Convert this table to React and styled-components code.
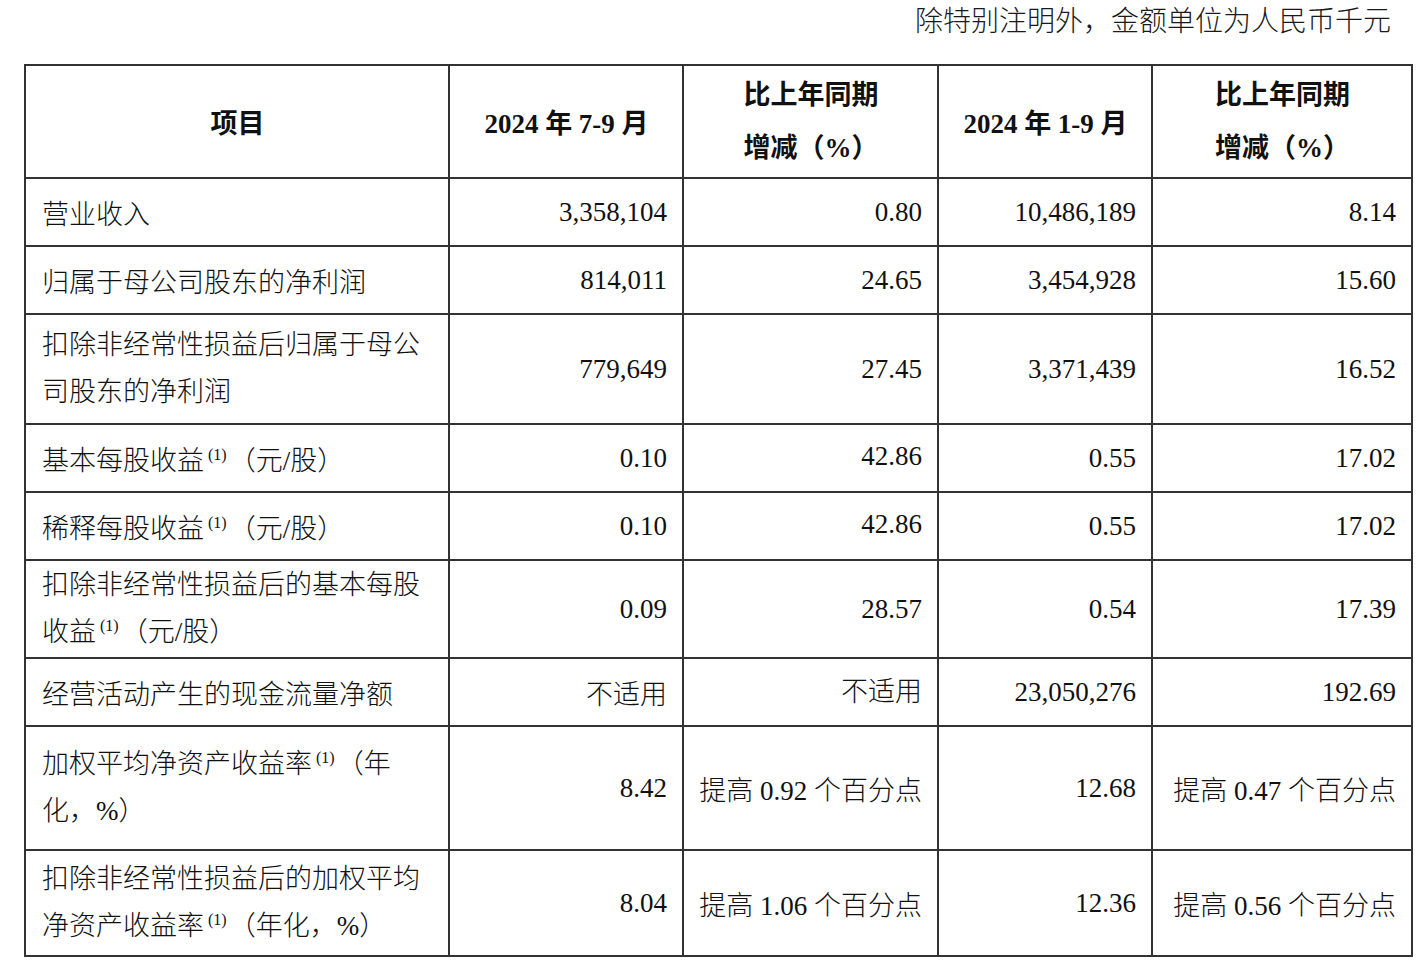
import React from "react";
import styled, { createGlobalStyle } from "styled-components";

const GlobalStyle = createGlobalStyle`
  html, body {
    margin: 0;
    padding: 0;
    background: #ffffff;
  }
  body {
    font-family: "Liberation Serif", "Noto Sans CJK SC", serif;
    color: #111;
  }
`;

const Page = styled.div`
  padding: 0 9px 0 24px;
  width: 1390px;
`;

const Note = styled.div`
  text-align: right;
  font-size: 28px;
  line-height: 44px;
  font-weight: 300;
  padding-right: 23px;
  margin-bottom: 20px;
  color: #1a1a1a;
`;

const Grid = styled.div`
  display: grid;
  grid-template-columns: 422px 232px 253px 212px 258px;
  grid-template-rows: ${(p) => p.$rows.map((r) => `${r}px`).join(" ")};
  gap: 2px;
  background: #333;
  border: 2px solid #333;
  width: max-content;
`;

const Cell = styled.div`
  background: #fff;
  display: flex;
  align-items: center;
  justify-content: ${(p) =>
    p.$align === "left" ? "flex-start" : p.$align === "center" ? "center" : "flex-end"};
  padding: 0 15px 0 16px;
  font-size: 27px;
  font-weight: ${(p) => (p.$head ? 700 : 300)};
  color: #111;
  white-space: nowrap;
`;

const Lines = styled.div`
  line-height: ${(p) => p.$lh || 47}px;
  text-align: left;
`;

const Num = styled.span`
  position: relative;
  top: ${(p) => p.$shift || 0}px;
`;

const Sup = styled.span`
  font-size: 16px;
  font-weight: 300;
  vertical-align: baseline;
  line-height: 1;
  position: relative;
  top: -10px;
  margin: 0 2px 0 4px;
`;

const rowHeights = [111, 66, 66, 108, 66, 66, 96, 66, 122, 104];

const S = () => <Sup>(1)</Sup>;

const rows = [
  { label: "营业收入", v: ["3,358,104", "0.80", "10,486,189", "8.14"] },
  { label: "归属于母公司股东的净利润", v: ["814,011", "24.65", "3,454,928", "15.60"] },
  {
    label: (
      <Lines>
        扣除非经常性损益后归属于母公
        <br />
        司股东的净利润
      </Lines>
    ),
    v: ["779,649", "27.45", "3,371,439", "16.52"],
  },
  {
    label: (
      <span>
        基本每股收益
        <S />
        （元/股）
      </span>
    ),
    v: ["0.10", "42.86", "0.55", "17.02"],
    shift: [0, -2, 0, 0],
  },
  {
    label: (
      <span>
        稀释每股收益
        <S />
        （元/股）
      </span>
    ),
    v: ["0.10", "42.86", "0.55", "17.02"],
    shift: [0, -2, 0, 0],
  },
  {
    label: (
      <Lines>
        扣除非经常性损益后的基本每股
        <br />
        收益
        <S />
        （元/股）
      </Lines>
    ),
    v: ["0.09", "28.57", "0.54", "17.39"],
  },
  {
    label: "经营活动产生的现金流量净额",
    v: ["不适用", "不适用", "23,050,276", "192.69"],
    shift: [0, -3, 0, 0],
  },
  {
    label: (
      <Lines>
        加权平均净资产收益率
        <S />
        （年
        <br />
        化，%）
      </Lines>
    ),
    v: ["8.42", "提高 0.92 个百分点", "12.68", "提高 0.47 个百分点"],
  },
  {
    label: (
      <Lines>
        扣除非经常性损益后的加权平均
        <br />
        净资产收益率
        <S />
        （年化，%）
      </Lines>
    ),
    v: ["8.04", "提高 1.06 个百分点", "12.36", "提高 0.56 个百分点"],
  },
];

const HeadTwo = () => (
  <Lines $lh={53}>
    比上年同期
    <br />
    增减（%）
  </Lines>
);

export default function App() {
  return (
    <>
      <GlobalStyle />
      <Page>
        <Note>除特别注明外，金额单位为人民币千元</Note>
        <Grid $rows={rowHeights}>
          <Cell $head $align="center">项目</Cell>
          <Cell $head $align="center">2024 年 7-9 月</Cell>
          <Cell $head $align="center">
            <HeadTwo />
          </Cell>
          <Cell $head $align="center">2024 年 1-9 月</Cell>
          <Cell $head $align="center">
            <HeadTwo />
          </Cell>
          {rows.map((r, i) => (
            <React.Fragment key={i}>
              <Cell $align="left">{r.label}</Cell>
              {r.v.map((val, j) => (
                <Cell key={j} $align="right">
                  <Num $shift={r.shift ? r.shift[j] : 0}>{val}</Num>
                </Cell>
              ))}
            </React.Fragment>
          ))}
        </Grid>
      </Page>
    </>
  );
}
